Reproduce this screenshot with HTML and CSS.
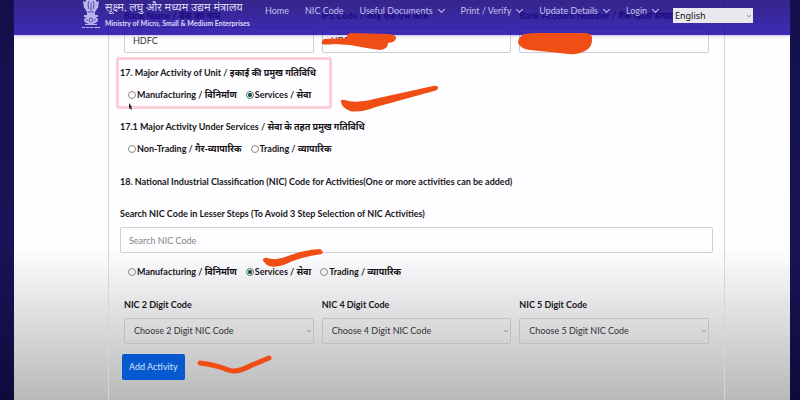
FILE: index.html
```html
<!DOCTYPE html>
<html lang="en">
<head>
  <meta charset="UTF-8">
  <title>Udyam Registration</title>
  <link rel="stylesheet" href="styles.css">
</head>
<body>

  <div class="page">
    <header class="topbar">
      <svg class="emblem" viewBox="0 0 18 30" aria-hidden="true">
        <g fill="#b9b4ea">
          <path d="M4 0h10l1 3-1 3 1 3-2 3v3H5v-3L3 9l1-3-1-3z"/>
          <path d="M1 1l3 1v7L2 8zM17 1l-3 1v7l2-1z"/>
          <path d="M2 15h14v2H2zM3 24h12v1H3zM0 27h18v1H0z"/>
          <ellipse cx="9" cy="20" rx="7" ry="4"/>
        </g>
        <g fill="none" stroke="#4433a8" stroke-width="0.8">
          <path d="M7 1l-1 4 1 4M11 1l1 4-1 4M9 3v8M6 12h6"/>
          <circle cx="9" cy="20" r="2"/>
          <path d="M4 19l2 2M14 19l-2 2M3 27.500h1M7 27.500h1M11 27.500h1"/>
        </g>
      </svg>
      <div class="brand">
        <span class="brand-hi">सूक्ष्म, लघु और मध्यम उद्यम मंत्रालय</span>
        <span class="brand-en">Ministry of Micro, Small &amp; Medium Enterprises</span>
      </div>
      <nav>
        <a href="#">Home</a>
        <a href="#">NIC Code</a>
        <a href="#" class="drop">Useful Documents</a>
        <a href="#" class="drop">Print / Verify</a>
        <a href="#" class="drop">Update Details</a>
        <a href="#" class="drop">Login</a>
      </nav>
      <select class="lang" aria-label="Language">
        <option>English</option>
      </select>
    </header>

    <main class="card">
      <div class="columns bank">
        <div class="field">
          <label for="bank">Bank Name / बैंक का नाम</label>
          <input type="text" id="bank" value="HDFC">
        </div>
        <div class="field">
          <label for="ifs">IFS Code / आई एफ एस कोड</label>
          <input type="text" id="ifs" value="HDFC">
        </div>
        <div class="field">
          <label for="account">Bank Account Number / बैंक खाता संख्या</label>
          <input type="text" id="account">
        </div>
      </div>

      <fieldset class="highlight">
        <legend>17. Major Activity of Unit / इकाई की प्रमुख गतिविधि</legend>
        <div class="choices">
          <label><input type="radio" name="unit">Manufacturing / विनिर्माण</label>
          <label><input type="radio" name="unit" checked>Services / सेवा</label>
        </div>
      </fieldset>

      <fieldset>
        <legend>17.1 Major Activity Under Services / सेवा के तहत प्रमुख गतिविधि</legend>
        <div class="choices">
          <label><input type="radio" name="under">Non-Trading / गैर-व्यापारिक</label>
          <label><input type="radio" name="under">Trading / व्यापारिक</label>
        </div>
      </fieldset>

      <h2>18. National Industrial Classification (NIC) Code for Activities(One or more activities can be added)</h2>

      <div class="search">
        <label for="nic">Search NIC Code in Lesser Steps (To Avoid 3 Step Selection of NIC Activities)</label>
        <input type="text" id="nic" placeholder="Search NIC Code">
      </div>

      <div class="choices">
        <label><input type="radio" name="nictype">Manufacturing / विनिर्माण</label>
        <label><input type="radio" name="nictype" checked>Services / सेवा</label>
        <label><input type="radio" name="nictype">Trading / व्यापारिक</label>
      </div>

      <div class="columns digits">
        <div class="field">
          <label for="nic2">NIC 2 Digit Code</label>
          <select id="nic2"><option>Choose 2 Digit NIC Code</option></select>
        </div>
        <div class="field">
          <label for="nic4">NIC 4 Digit Code</label>
          <select id="nic4"><option>Choose 4 Digit NIC Code</option></select>
        </div>
        <div class="field">
          <label for="nic5">NIC 5 Digit Code</label>
          <select id="nic5"><option>Choose 5 Digit NIC Code</option></select>
        </div>
      </div>

      <button type="button" class="add">Add Activity</button>
    </main>
  </div>

  <!-- pen marks and mouse pointer over the form -->
  <svg class="ink" viewBox="0 0 800 400" aria-hidden="true">
    <g fill="#f04e14">
      <path d="M324 39 Q321 41 322 44 Q325 45 335 44 L350 45 Q365 48 380 50 Q388 49 388 43 Q397 42 396 37 Q394 34 388 34 L350 33 Q346 35 347 38 Z"/>
      <path d="M524 34 Q518 37 518 43 Q521 49 530 50 L560 53 Q577 56 585 51 Q593 47 592 37 Q591 33 584 33 L535 33 Z"/>
      <path d="M341 102 Q340 99 345 100 Q355 104 374 99 L433 86 Q438 85 438 88 Q438 90 434 91 L376 107 Q360 113 350 111 Q342 108 341 102 Z"/>
      <path d="M263 261 Q263 257 267 258 Q277 261 288 256 Q303 250 320 249 Q324 251 322 254 Q300 257 286 264 Q273 269 267 265 Z"/>
    </g>
    <path d="M200 363 Q215 365 223 368 Q230 371 234 371 Q241 371 252 365 L269 358" fill="none" stroke="#f04e14" stroke-width="5" stroke-linecap="round" stroke-linejoin="round"/>
    <path d="M129 103v6l1-1 1 2 1-1-1-2h1z" fill="#222"/>
  </svg>

</body>
</html>
```
FILE: styles.css
```css
* {
  box-sizing: border-box;
}

body {
  margin: 0;
  padding: 0 10px 0 14px;
  background: linear-gradient(#12104a, #191458 60%, #0e0b3c);
  color: #161618;
  font-family: Lato, "Noto Sans", sans-serif;
  font-size: 9px;
  line-height: 16px;
}

.page {
  position: relative;
  min-height: 100vh;
  padding: 0 65px 0 94px;
  background: linear-gradient(#fefdff 62%, #e4e3e6 76%, #b9b9ba);
}

.topbar {
  position: absolute;
  top: 0;
  left: 0;
  right: 0;
  z-index: 1;
  display: flex;
  align-items: flex-start;
  height: 35px;
  padding: 0 37px 0 68px;
  background: linear-gradient(rgba(22, 6, 120, 0.87), rgba(34, 12, 172, 0.87));
  box-shadow: 0 1px 3px rgba(60, 41, 184, 0.3);
}

.emblem {
  width: 18px;
  height: 30px;
}

.brand {
  display: flex;
  flex-direction: column;
  width: 165px;
  padding-left: 5px;
  color: #dcd9f5;
  white-space: nowrap;
}

.brand-hi {
  font-size: 11px;
  line-height: 14px;
}

.brand-en {
  font-size: 7px;
  font-weight: bold;
  line-height: 18px;
}

nav {
  display: flex;
  flex: 1;
  gap: 16px;
  padding-top: 3px;
}

nav a {
  color: #c5c0ee;
  text-decoration: none;
  white-space: nowrap;
}

.drop::after {
  content: "";
  display: inline-block;
  width: 4px;
  height: 4px;
  margin: 0 1px 2px 6px;
  border: solid #c5c0ee;
  border-width: 0 1px 1px 0;
  transform: rotate(45deg);
}

select {
  appearance: none;
  background: url("data:image/svg+xml,%3Csvg xmlns='http://www.w3.org/2000/svg' viewBox='0 0 6 4'%3E%3Cpath d='M1 1l2 2 2-2' fill='none' stroke='%23777' stroke-width='.7'/%3E%3C/svg%3E") no-repeat right 1px center / 6px 4px;
  color: #333;
  font: inherit;
}

.lang {
  width: 80px;
  height: 15px;
  margin-top: 8px;
  padding: 0 2px;
  border: 0;
  border-radius: 0;
  background-color: #e9e8ee;
  color: #111;
  font-family: "Noto Sans", sans-serif;
  line-height: 15px;
}

.card {
  min-height: 100vh;
  padding: 8px 11px;
  border: solid #d5d4d8;
  border-width: 0 1px;
}

.columns {
  display: grid;
  grid-template-columns: repeat(3, 1fr);
  gap: 8px;
  padding: 0 4px;
}

.field {
  display: flex;
  flex-direction: column;
}

label,
legend,
h2 {
  margin: 0;
  padding: 0;
  font-size: 9px;
  font-weight: bold;
  white-space: nowrap;
}

input[type="text"],
.field select {
  width: 100%;
  height: 26px;
  padding: 0 8px;
  border: 1px solid #cfced3;
  border-radius: 2px;
  background-color: transparent;
  color: #333;
  font: inherit;
}

.field select {
  border-color: #bfbec2;
}

.bank input {
  margin-top: 3px;
}

input::placeholder {
  color: #85858a;
}

fieldset {
  margin: 0 0 17px;
  padding: 0;
  border: 0;
}

/* pink frame round the question */
.highlight {
  width: 216px;
  margin: 4px 0 10px -4px;
  padding: 0 0 6px;
  border-radius: 3px;
  box-shadow: inset 0 0 0 3px #f9cfd6;
}

.highlight legend {
  float: left;
  padding: 8px 4px 0;
}

.highlight .choices {
  clear: both;
  padding-left: 12px;
}

.choices {
  display: flex;
  gap: 9px;
  padding: 6px 0 0 8px;
}

.choices label {
  display: flex;
  align-items: center;
}

input[type="radio"] {
  appearance: none;
  width: 8px;
  height: 8px;
  margin: 0 1px 0 0;
  border: 1px solid #88888c;
  border-radius: 50%;
}

input[type="radio"]:checked {
  border-color: #4b7a70;
  background: radial-gradient(#1f5a50 45%, transparent 55%);
}

h2 {
  margin-bottom: 16px;
}

.search input {
  margin-top: 5px;
}

.search + .choices {
  padding-top: 11px;
}

.digits {
  margin-top: 17px;
}

.digits select {
  margin-top: 5px;
  padding: 0 9px;
}

.add {
  height: 26px;
  margin: 10px 0 0 2px;
  padding: 0 7px;
  border: 0;
  border-radius: 2px;
  background: #0759d0;
  color: #d5e2f7;
  font: inherit;
}

.ink {
  position: absolute;
  top: 0;
  left: 0;
  z-index: 2;
  width: 800px;
  height: 400px;
  pointer-events: none;
}
```
